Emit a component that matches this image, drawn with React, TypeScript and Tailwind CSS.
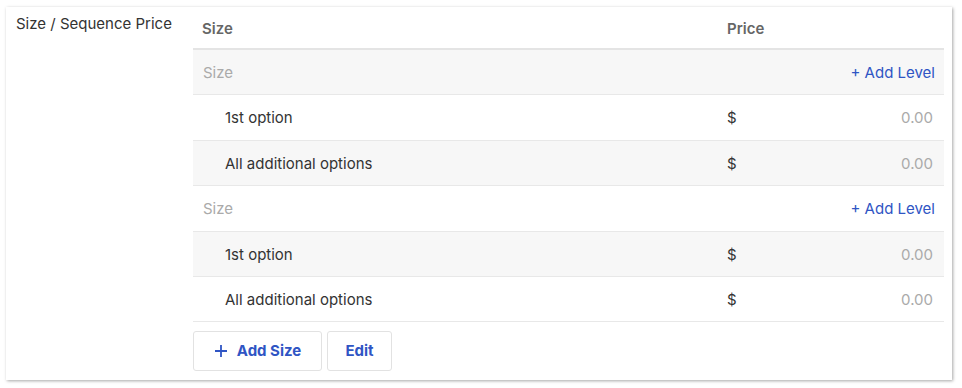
import React from 'react';

type Row = { kind: 'group' | 'option'; label: string; shaded: boolean };

const rows: Row[] = [
  { kind: 'group', label: 'Size', shaded: true },
  { kind: 'option', label: '1st option', shaded: false },
  { kind: 'option', label: 'All additional options', shaded: true },
  { kind: 'group', label: 'Size', shaded: false },
  { kind: 'option', label: '1st option', shaded: true },
  { kind: 'option', label: 'All additional options', shaded: false },
];

const App: React.FC = () => {
  return (
    <div className="w-[962px] h-[388px] bg-white pt-[7px] pl-[6px] font-['Inter',sans-serif]">
      <div className="flex w-[946px] h-[373px] bg-white shadow-[1px_1px_3px_rgba(0,0,0,0.35)]">
        <div className="w-[187px] pl-[10px] pt-[6px] text-[15px] text-[#333]">Size / Sequence Price</div>
        <div className="flex flex-col w-[751px]">
          <div className="flex h-[43px] items-center border-b-2 border-[#e4e4e4] text-[15px] font-semibold text-[#666] pt-[3px]">
            <div className="flex-1 pl-[9px]">Size</div>
            <div className="w-[217px]">Price</div>
          </div>
          {rows.map((row, i) => (
            <div
              key={i}
              className={`flex h-[45.4px] items-center border-b border-[#e8e8e8] pt-[2px] text-[15px] ${
                row.shaded ? 'bg-[#f7f7f7]' : 'bg-white'
              }`}
            >
              {row.kind === 'group' ? (
                <>
                  <div className="flex-1 pl-[10px] text-[#aaa]">{row.label}</div>
                  <div className="pr-[9px] text-[#2f55c4]">+ Add Level</div>
                </>
              ) : (
                <>
                  <div className="flex-1 pl-[32px] text-[#333]">{row.label}</div>
                  <div className="flex w-[217px] pr-[11px] justify-between">
                    <span className="text-[#333]">$</span>
                    <span className="text-[#aaa]">0.00</span>
                  </div>
                </>
              )}
            </div>
          ))}
          <div className="flex gap-[5px] mt-[9px]">
            <button className="flex items-center justify-center gap-[9px] w-[129px] h-[40px] border border-[#e2e2e2] rounded-[3px] text-[15px] font-bold text-[#2f55c4]">
              <svg width="14" height="14" viewBox="0 0 14 14">
                <path d="M7 1v12M1 7h12" stroke="#2f55c4" strokeWidth="1.8" />
              </svg>
              Add Size
            </button>
            <button className="w-[65px] h-[40px] border border-[#e2e2e2] rounded-[3px] text-[15px] font-bold text-[#2f55c4]">
              Edit
            </button>
          </div>
        </div>
      </div>
    </div>
  );
};

export default App;
